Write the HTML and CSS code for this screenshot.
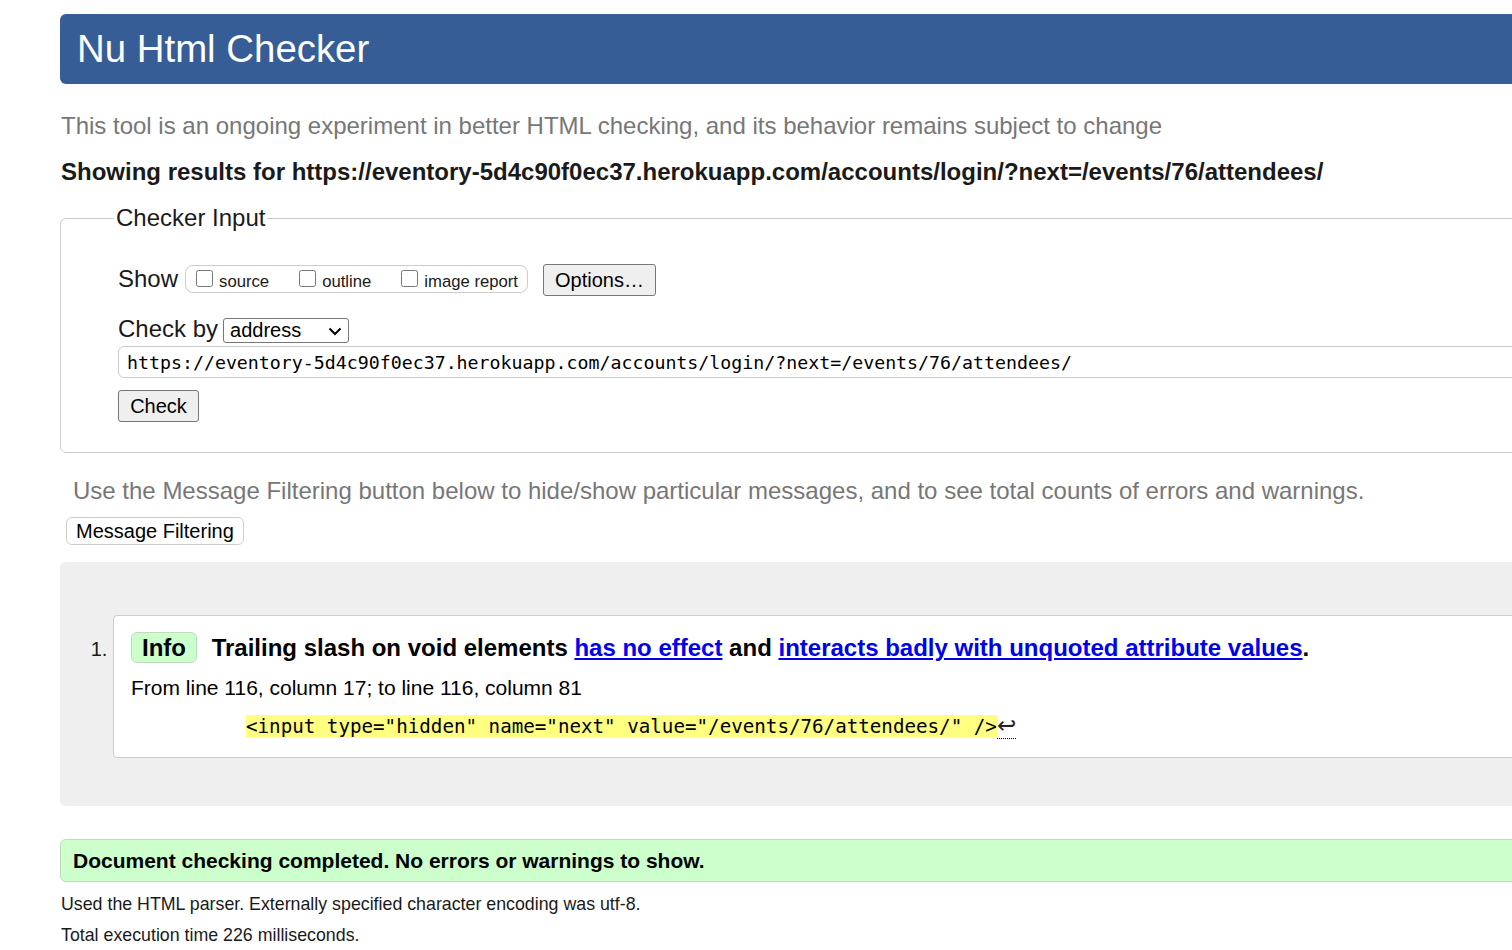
FILE: index.html
```html
<!DOCTYPE html>
<html lang="en">
<head>
<meta charset="utf-8">
<title>Showing results for https://eventory-5d4c90f0ec37.herokuapp.com/accounts/login/?next=/events/76/attendees/ - Nu Html Checker</title>
<link rel="stylesheet" href="styles.css">
</head>
<body>
<div class="page">
  <h1 class="brand">Nu Html Checker</h1>
  <p class="tagline">This tool is an ongoing experiment in better HTML checking, and its behavior remains subject to change</p>
  <p class="showing">Showing results for https://eventory-5d4c90f0ec37.herokuapp.com/accounts/login/?next=/events/76/attendees/</p>
  <form class="checker" onsubmit="return false">
    <fieldset class="input-set">
      <legend class="legend">Checker Input</legend>
      <div class="row show-row">
        <span class="row-label">Show</span>
        <span class="options-box">
          <label class="opt"><input class="cb" type="checkbox">source</label>
          <label class="opt"><input class="cb" type="checkbox">outline</label>
          <label class="opt"><input class="cb" type="checkbox">image report</label>
        </span>
        <button type="button" class="btn options-btn">Options…</button>
      </div>
      <div class="row checkby-row">
        <span class="row-label">Check by</span>
        <span class="select-wrap">
          <select class="select"><option>address</option><option>file upload</option><option>text input</option></select>
          <svg class="chevron" width="14" height="9" viewBox="0 0 14 9" aria-hidden="true"><path d="M1.5 1.5 L7 7 L12.5 1.5" fill="none" stroke="#000" stroke-width="2"/></svg>
        </span>
      </div>
      <input class="url" type="text" value="https://eventory-5d4c90f0ec37.herokuapp.com/accounts/login/?next=/events/76/attendees/">
      <button type="button" class="btn check-btn">Check</button>
    </fieldset>
  </form>
  <p class="filter-hint">Use the Message Filtering button below to hide/show particular messages, and to see total counts of errors and warnings.</p>
  <button type="button" class="filter-btn">Message Filtering</button>
  <div class="results">
    <ol class="msg-list">
      <li class="msg-item">
        <div class="msg">
          <p class="msg-head"><strong class="badge">Info</strong> <span class="msg-text">Trailing slash on void elements <a class="link" href="#">has no effect</a> and <a class="link" href="#">interacts badly with unquoted attribute values</a>.</span></p>
          <p class="location">From line 116, column 17; to line 116, column 81</p>
          <p class="extract"><code class="code"><mark class="hl">&lt;input type="hidden" name="next" value="/events/76/attendees/" /&gt;</mark><span class="lf">↩</span></code></p>
        </div>
      </li>
    </ol>
  </div>
  <p class="success">Document checking completed. No errors or warnings to show.</p>
  <p class="details first">Used the HTML parser. Externally specified character encoding was utf-8.</p>
  <p class="details">Total execution time 226 milliseconds.</p>
</div>
</body>
</html>
```

FILE: styles.css
```css
html {
  overflow: hidden;
}

body {
  margin: 0;
  background: #fff;
  color: #000;
  font-family: "Liberation Sans", Arial, sans-serif;
}

.page {
  width: 1800px;
  padding: 14px 0 0 60px;
}

.brand {
  margin: 0;
  height: 70px;
  line-height: 70px;
  padding-left: 17px;
  background: #365d95;
  color: #fff;
  font-size: 38.4px;
  font-weight: normal;
  border-radius: 6px 0 0 6px;
}

.tagline {
  margin: 28px 0 0 1px;
  font-size: 24px;
  line-height: 28px;
  color: #777;
}

.showing {
  margin: 18px 0 0 1px;
  font-size: 24px;
  line-height: 28px;
  font-weight: bold;
  color: #1a1a1a;
}

.checker {
  margin: 18px 0 0;
}

.input-set {
  margin: 0;
  min-width: 0;
  padding: 0 0 30px 57px;
  border: 1px solid #ccc;
  border-radius: 6px 0 0 6px;
}

.legend {
  margin-left: -4px;
  padding: 0 2px;
  font-size: 24px;
  line-height: 28px;
  color: #1a1a1a;
}

.row {
  display: flex;
  align-items: baseline;
}

.row-label {
  font-size: 24px;
  line-height: 28px;
  color: #1a1a1a;
}

.show-row {
  margin-top: 32px;
}

.options-box {
  display: inline-flex;
  align-items: baseline;
  gap: 30px;
  height: 28px;
  box-sizing: border-box;
  margin-left: 7px;
  padding: 4px 9px 0 10px;
  border: 1px solid #ccc;
  border-radius: 8px;
  font-size: 16.7px;
  line-height: 19px;
}

.opt {
  color: #1a1a1a;
}

.cb {
  width: 17px;
  height: 17px;
  margin: 0 6px 2px 0;
  vertical-align: baseline;
}

.btn {
  height: 32px;
  box-sizing: border-box;
  padding: 0 11px;
  background: #efefef;
  color: #000;
  border: 1px solid #767676;
  border-radius: 3px;
  font-family: "Liberation Sans", Arial, sans-serif;
  font-size: 20px;
}

.options-btn {
  margin-left: 15px;
}

.checkby-row {
  margin-top: 19px;
}

.select-wrap {
  position: relative;
  display: inline-block;
  margin-left: 5px;
}

.select {
  width: 126px;
  height: 25px;
  padding: 0 6px;
  border: 1px solid #767676;
  border-radius: 3px;
  background: #fff;
  color: #000;
  font-family: "Liberation Sans", Arial, sans-serif;
  font-size: 20px;
  appearance: none;
  -webkit-appearance: none;
}

.chevron {
  position: absolute;
  right: 7px;
  top: 9px;
  pointer-events: none;
}

.url {
  display: block;
  width: 1700px;
  height: 32px;
  box-sizing: border-box;
  margin: 3px 0 0;
  padding: 0 8px;
  border: 1px solid #ccc;
  border-radius: 6px 0 0 6px;
  font-family: "DejaVu Sans Mono", "Liberation Mono", monospace;
  font-size: 18.25px;
  color: #000;
}

.check-btn {
  display: block;
  width: 81px;
  margin-top: 12px;
}

.filter-hint {
  margin: 24px 0 0 13px;
  font-size: 24px;
  line-height: 28px;
  color: #777;
}

.filter-btn {
  display: block;
  height: 28px;
  box-sizing: border-box;
  margin: 12px 0 0 6px;
  padding: 0 9px;
  background: #fff;
  color: #000;
  border: 1px solid #ccc;
  border-radius: 6px;
  font-family: "Liberation Sans", Arial, sans-serif;
  font-size: 20px;
}

.results {
  margin-top: 17px;
  padding: 53px 0 48px;
  background: #efefef;
  border-radius: 6px 0 0 6px;
}

.msg-list {
  margin: 0;
  padding-left: 53px;
  font-size: 20px;
  color: #1a1a1a;
}

.msg {
  padding: 16px 0 18px 17px;
  background: #fff;
  border: 1px solid #ccc;
  border-radius: 4px 0 0 4px;
}

.msg-head {
  margin: 0;
  font-size: 24px;
  line-height: 31px;
  font-weight: bold;
  color: #000;
}

.badge {
  display: inline-block;
  height: 31px;
  box-sizing: border-box;
  padding: 0 10px;
  margin-right: 8px;
  background: #ccffcc;
  border: 1px solid #bbddbb;
  border-radius: 6px;
  line-height: 29px;
  vertical-align: top;
}

.link {
  color: #0000ee;
}

.location {
  margin: 13px 0 0;
  font-size: 21px;
  line-height: 24px;
  color: #000;
}

.extract {
  margin: 14px 0 0 115px;
  line-height: 24px;
}

.code {
  font-family: "DejaVu Sans Mono", "Liberation Mono", monospace;
  font-size: 19.2px;
  color: #000;
}

.hl {
  background: #ffff80;
  color: #000;
}

.lf {
  font-family: "DejaVu Sans", sans-serif;
  font-size: 23px;
  line-height: 20px;
  border-bottom: 1px dotted #000;
  color: #222;
}

.success {
  margin: 33px 0 0;
  height: 43px;
  box-sizing: border-box;
  padding-left: 12px;
  background: #ccffcc;
  border: 1px solid #bbddbb;
  border-radius: 6px 0 0 6px;
  font-size: 21px;
  line-height: 41px;
  font-weight: bold;
  color: #000;
}

.details {
  margin: 8px 0 0 1px;
  font-size: 17.8px;
  line-height: 23px;
  color: #1a1a1a;
}

.details.first {
  margin-top: 11px;
}
```
